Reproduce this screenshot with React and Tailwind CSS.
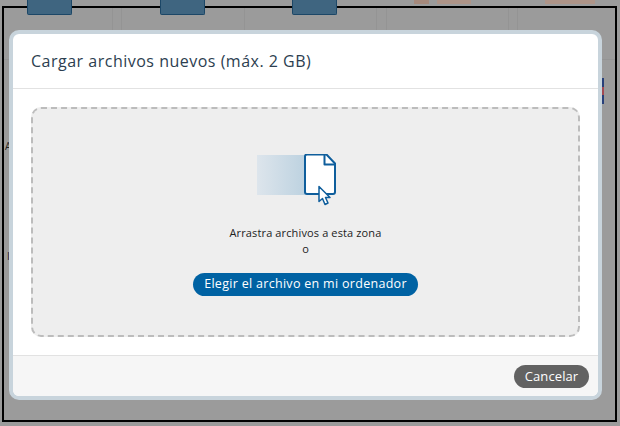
export default function App() {
  return (
    <div className="relative w-[620px] h-[426px] overflow-hidden bg-[#9b9b9b] font-['Open_Sans',sans-serif]">
      {/* dimmed page behind the dialog */}
      <div className="flex h-[6px] items-start">
        <div className="ml-[27px] h-[15px] w-[45px] shrink-0 rounded-b-[2px] border border-t-0 border-[#1c4767] bg-[#3f6580]" />
        <div className="ml-[88px] h-[15px] w-[45px] shrink-0 rounded-b-[2px] border border-t-0 border-[#1c4767] bg-[#3f6580]" />
        <div className="ml-[87px] h-[15px] w-[45px] shrink-0 rounded-b-[2px] border border-t-0 border-[#1c4767] bg-[#3f6580]" />
        <div className="ml-[77px] h-[4px] w-[15px] shrink-0 bg-[#a5897c]" />
        <div className="ml-[8px] h-[4px] w-[34px] shrink-0 bg-[#ae9488]" />
        <div className="ml-[74px] h-[4px] w-[50px] shrink-0 bg-[#ae9488]" />
      </div>
      <div className="ml-[2px] h-[416px] w-[615px] border-2 border-black text-[10px] leading-none text-[#222]">
        <div className="flex h-[52px] border-b border-[#949494]">
          <div className="w-[109px] border-r border-[#949494]" />
          <div className="w-[9px] border-r border-[#949494]" />
          <div className="w-[123px] border-r border-[#949494]" />
          <div className="w-[132px] border-r border-[#949494]" />
          <div className="w-[10px] border-r border-[#949494]" />
          <div className="w-[122px] border-r border-[#949494]" />
          <div className="w-[9px] border-r border-[#949494]" />
        </div>
        <p className="mt-[81px] ml-[1px]">A</p>
        <p className="mt-[100px] ml-[3px]">I</p>
      </div>
      <div className="absolute left-[602px] top-[78px] flex flex-col">
        <div className="h-[9px] w-[2px] bg-[#28407a]" />
        <div className="h-[8px] w-[2px] bg-[#a34a52]" />
        <div className="h-[9px] w-[2px] bg-[#28407a]" />
      </div>

      {/* overlay dialog */}
      <div className="absolute left-[9px] top-[30px] flex h-[370px] w-[593px] flex-col overflow-hidden rounded-[10px] border-4 border-[#c8d4dc] bg-white">
        <div className="flex h-[55px] shrink-0 items-center border-b border-[#e2e2e2] pl-[18px]">
          <h2 className="text-[16px] leading-none tracking-[0.5px] text-[#2c3e50]">Cargar archivos nuevos (máx. 2 GB)</h2>
        </div>
        <div className="flex flex-1 px-[18px] pt-[18px] pb-[18px]">
          <div className="flex flex-1 flex-col items-center rounded-[10px] border-2 border-dashed border-[#bcbcbc] bg-[#eeeeee]">
            <svg className="mt-[45px] mr-[18px]" width="80" height="54" viewBox="0 0 80 54" fill="none">
              <defs>
                <linearGradient id="fade" x1="0" x2="1" y1="0" y2="0">
                  <stop offset="0" stopColor="#dde5ec" />
                  <stop offset="1" stopColor="#bdd2e0" />
                </linearGradient>
              </defs>
              <rect x="0" y="1" width="48" height="40" fill="url(#fade)" />
              <path d="M50 0.5H69.5L78 9.5V38a2 2 0 0 1-2 2H50a2 2 0 0 1-2-2V2.5a2 2 0 0 1 2-2Z" fill="#fff" stroke="#0f5e9c" strokeWidth="2" strokeLinejoin="round" />
              <path d="M67.5 1V10.5H78" fill="none" stroke="#0f5e9c" strokeWidth="2" strokeLinejoin="round" />
              <path d="M62 32.5V47.5L65.5 44.5L68 50.5L71 49L68.5 43.5H73Z" fill="#fff" stroke="#0f5e9c" strokeWidth="1.5" strokeLinejoin="round" />
            </svg>
            <p className="mt-[17px] text-[11px] leading-[16px] tracking-[0.13px] text-[#222]">Arrastra archivos a esta zona</p>
            <p className="text-[11px] leading-[15px] text-[#222]">o</p>
            <button className="mt-[17px] h-[23px] w-[225px] rounded-full bg-[#0062a3] text-[12.5px] leading-none tracking-[0.3px] text-white">Elegir el archivo en mi ordenador</button>
          </div>
        </div>
        <div className="flex h-[41px] shrink-0 items-center justify-end border-t border-[#e2e2e2] bg-[#f6f6f6] pr-[9px]">
          <button className="h-[23px] w-[75px] rounded-full bg-[#626262] text-[13px] leading-none tracking-[0.1px] text-white">Cancelar</button>
        </div>
      </div>
    </div>
  );
}
